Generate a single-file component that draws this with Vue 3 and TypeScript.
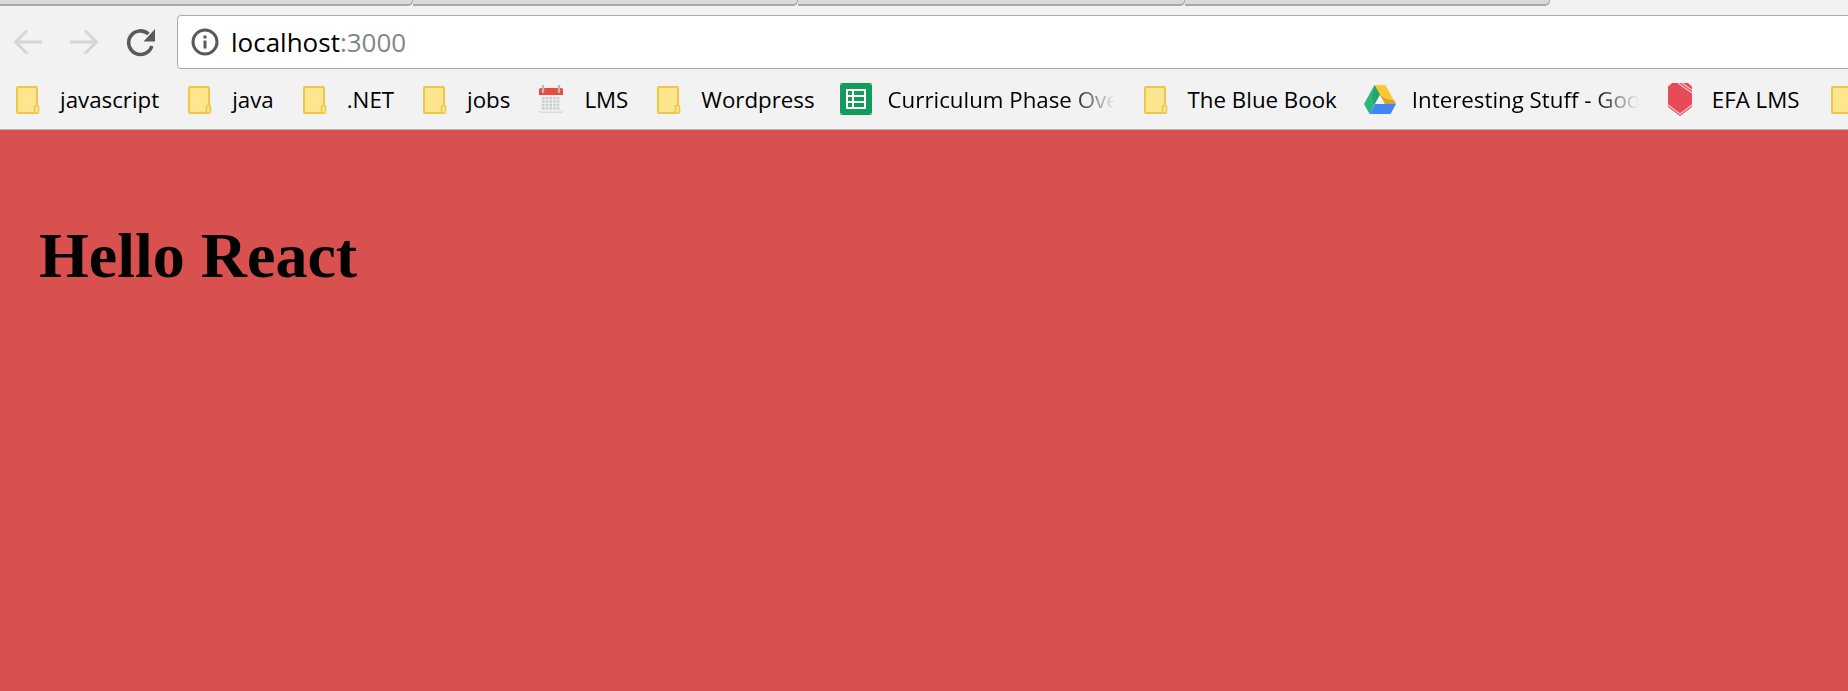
<script setup lang="ts">
type Kind = 'folder' | 'calendar' | 'sheets' | 'drive' | 'shield';

interface Bookmark {
  label: string;
  icon: Kind;
  faded?: boolean;
}

const tabs = [1, 2, 3, 4];

const bookmarks: Bookmark[] = [
  { label: 'javascript', icon: 'folder' },
  { label: 'java', icon: 'folder' },
  { label: '.NET', icon: 'folder' },
  { label: 'jobs', icon: 'folder' },
  { label: 'LMS', icon: 'calendar' },
  { label: 'Wordpress', icon: 'folder' },
  { label: 'Curriculum Phase Overview', icon: 'sheets', faded: true },
  { label: 'The Blue Book', icon: 'folder' },
  { label: 'Interesting Stuff - Google Drive', icon: 'drive', faded: true },
  { label: 'EFA LMS', icon: 'shield' },
  { label: '', icon: 'folder' },
];

const gridRows = [0, 1, 2, 3];
const gridCols = [0, 1, 2, 3, 4];
</script>

<template>
  <div class="page">
    <div class="tabstrip">
      <div v-for="t in tabs" :key="t" class="tab"></div>
    </div>

    <div class="toolbar">
      <button class="nav" aria-label="Back">
        <svg width="32" height="32" viewBox="0 0 32 32" fill="none" stroke="#d6d6d6" stroke-width="3">
          <path d="M30 16H4M15 4.500 3.500 16 15 27.500" />
        </svg>
      </button>
      <button class="nav" aria-label="Forward">
        <svg width="32" height="32" viewBox="0 0 32 32" fill="none" stroke="#d6d6d6" stroke-width="3">
          <path d="M2 16h26M17 4.500 28.500 16 17 27.500" />
        </svg>
      </button>
      <button class="nav" aria-label="Reload">
        <svg width="32" height="32" viewBox="0 0 32 32" fill="none">
          <path d="M27.800 20A11.800 11.800 0 1 1 24.500 8" stroke="#5a5a5a" stroke-width="3.600" />
          <path d="M31 3v12.500H19.500z" fill="#5a5a5a" />
        </svg>
      </button>
      <div class="omnibox">
        <svg class="info" width="28" height="28" viewBox="0 0 28 28">
          <circle cx="14" cy="14" r="12" fill="none" stroke="#5a5a5a" stroke-width="3" />
          <rect x="12.500" y="12.500" width="3" height="8" fill="#5a5a5a" />
          <rect x="12.500" y="7.500" width="3" height="3" fill="#5a5a5a" />
        </svg>
        <span class="url">localhost<span class="port">:3000</span></span>
      </div>
    </div>

    <div class="bookmarks">
      <div v-for="(b, i) in bookmarks" :key="i" class="bookmark" :class="b.icon">
        <svg v-if="b.icon === 'folder'" class="icon" width="24" height="28" viewBox="0 0 24 28">
          <rect x="1" y="1" width="20" height="26" rx="1" fill="#fee68f" stroke="#eec64a" stroke-width="2" />
          <rect x="18.500" y="19.500" width="4" height="7.500" rx="1" fill="#fee68f" stroke="#eec64a" stroke-width="1.600" />
        </svg>
        <svg v-else-if="b.icon === 'calendar'" class="icon" width="24" height="28" viewBox="0 0 24 28">
          <rect x="0" y="3" width="24" height="25" rx="2" fill="#d9dcdf" />
          <rect x="0" y="3" width="24" height="23.500" rx="2" fill="#f1f1f1" />
          <path d="M0 5a2 2 0 0 1 2-2h20a2 2 0 0 1 2 2v5H0z" fill="#e74c3c" />
          <path d="M4 1v6M20 1v6" stroke="#b9b9b9" stroke-width="2.400" stroke-linecap="round" />
          <g v-for="r in gridRows" :key="r">
            <rect v-for="c in gridCols" :key="c" :x="3 + c * 3.700" :y="12 + r * 3.400" width="2.600" height="2.400" fill="#c9ced3" />
          </g>
        </svg>
        <svg v-else-if="b.icon === 'sheets'" class="icon" width="32" height="32" viewBox="0 0 32 32">
          <rect width="32" height="32" fill="#129c5a" />
          <path d="M0 0h2v2H0zM30 0h2v2h-2zM0 30h2v2H0zM30 30h2v2h-2z" fill="#6fc39a" />
          <rect x="6" y="6" width="20" height="20" fill="#fff" />
          <path d="M8 8h4v4H8zM14 8h10v4H14zM8 14h4v4H8zM14 14h10v4H14zM8 20h4v4H8zM14 20h10v4H14z" fill="#129c5a" />
        </svg>
        <svg v-else-if="b.icon === 'drive'" class="icon" width="32" height="29" viewBox="0 0 32 29">
          <path d="M10.500 0h11L32 19H21z" fill="#fcc934" />
          <path d="M16 9.500 21 19h11l-2-3.500-9-2z" fill="#c69a2c" opacity="0.75" />
          <path d="M10.500 0 0 19l5.500 10L16 9.500z" fill="#2fb47a" />
          <path d="M10.500 0 16 9.500 10.500 19 8 14z" fill="#23966a" opacity="0.6" />
          <path d="M11 19h21l-5.500 10h-21z" fill="#4285f4" />
        </svg>
        <svg v-else class="icon" width="24" height="33" viewBox="0 0 24 33">
          <path d="M0 3.500 4 0h16l4 3.500V24L12 33 0 24z" fill="#e64c58" />
          <path d="M10 0l14 10M14 0l10 7" stroke="#f6c6ca" stroke-width="1.200" fill="none" />
          <path d="M0 22l12 9 12-9" stroke="#f6c6ca" stroke-width="1.200" fill="none" />
        </svg>
        <span v-if="b.label" class="label" :class="{ faded: b.faded }">{{ b.label }}</span>
      </div>
    </div>

    <main class="content">
      <h1>Hello React</h1>
    </main>
  </div>
</template>

<style scoped>
.page {
  display: flex;
  flex-direction: column;
  width: 1848px;
  height: 691px;
  overflow: hidden;
  background: #f2f2f2;
}

.tabstrip {
  display: flex;
  height: 6px;
  flex: none;
}

.tab {
  height: 6px;
  box-sizing: border-box;
  background: #d9d9d9;
  border-bottom: 2px solid #a8a8a8;
  border-right: 1.5px solid #a8a8a8;
  border-bottom-right-radius: 5px;
}

.tab:nth-child(1) {
  width: 413px;
}

.tab:nth-child(2) {
  width: 385px;
}

.tab:nth-child(3) {
  width: 387px;
}

.tab:nth-child(4) {
  width: 365px;
}

.toolbar {
  display: flex;
  align-items: flex-start;
  flex: none;
  height: 63px;
  padding-top: 9px;
  box-sizing: border-box;
}

.nav {
  width: 56px;
  height: 54px;
  flex: none;
  padding: 0;
  border: 0;
  background: none;
  display: flex;
  align-items: center;
  justify-content: center;
}

.omnibox {
  display: flex;
  align-items: center;
  flex: none;
  width: 1700px;
  height: 54px;
  margin-left: 9px;
  padding-left: 13px;
  box-sizing: border-box;
  background: #fff;
  border: 1px solid #a9a9a9;
  border-radius: 4px;
}

.info {
  flex: none;
  margin-right: 12px;
}

.url {
  font-family: "Open Sans", sans-serif;
  font-size: 26px;
  color: #000;
}

.port {
  color: #80868b;
}

.bookmarks {
  display: flex;
  align-items: center;
  flex: none;
  height: 61px;
  padding-left: 16px;
  box-sizing: border-box;
  border-bottom: 1px solid #b4b4b4;
  overflow: hidden;
}

.bookmark {
  display: flex;
  align-items: center;
  flex: none;
  margin-right: 29px;
}

.bookmark:nth-child(6) {
  margin-right: 25px;
}

.bookmark:nth-child(8) {
  margin-right: 27px;
}

.bookmark:nth-child(10) {
  margin-right: 31px;
}

.icon {
  flex: none;
  margin-right: 20px;
}

.folder .icon {
  margin-top: 1px;
}

.calendar .icon {
  margin-right: 21px;
}

.sheets .icon,
.drive .icon {
  margin-right: 16px;
}

.label {
  margin-top: 2px;
  font-family: "Open Sans", sans-serif;
  font-size: 22.3px;
  line-height: 30px;
  color: #000;
  white-space: nowrap;
}

.faded {
  display: block;
  width: 227px;
  overflow: hidden;
  -webkit-mask-image: linear-gradient(to right, #000 80%, transparent 100%);
  mask-image: linear-gradient(to right, #000 80%, transparent 100%);
}

.content {
  flex: 1;
  background: #d9514f;
  padding: 89px 39px 0;
}

h1 {
  margin: 0;
  font-family: "Liberation Serif", serif;
  font-size: 64px;
  line-height: 74px;
  font-weight: bold;
  color: #000;
}
</style>
